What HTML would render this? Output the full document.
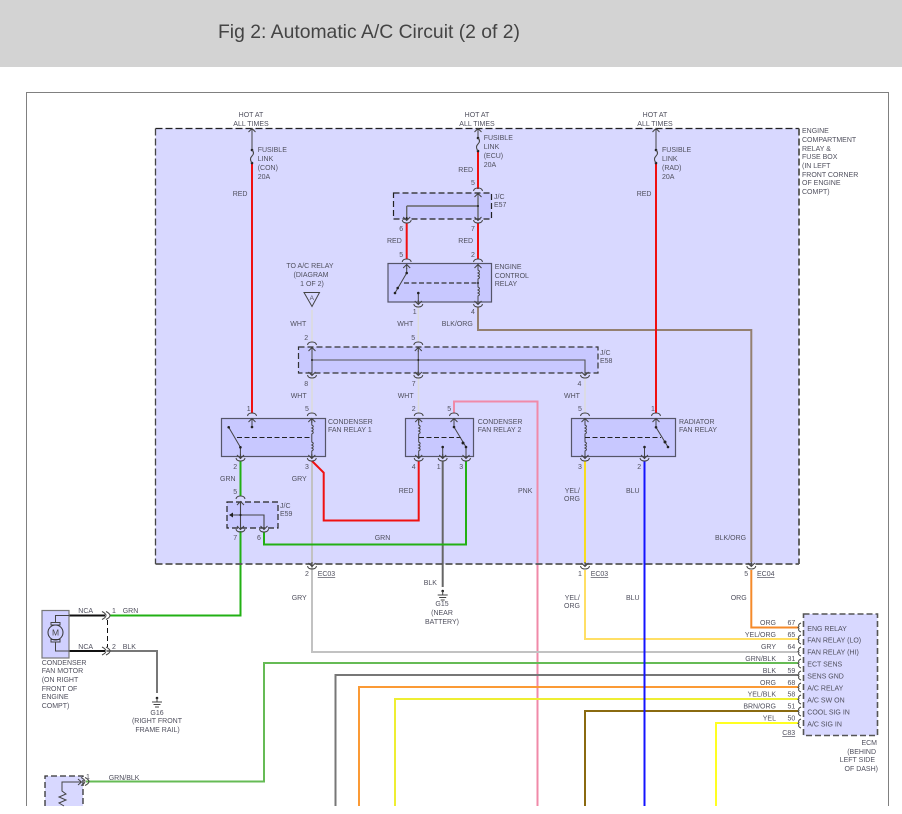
<!DOCTYPE html>
<html><head><meta charset="utf-8"><title>Fig 2: Automatic A/C Circuit (2 of 2)</title>
<style>
html,body{margin:0;padding:0;background:#fff;width:902px;height:814px;overflow:hidden}
svg{display:block}
text{font-family:"Liberation Sans",sans-serif;font-size:7px;fill:#50505e}
.m{text-anchor:middle}.e{text-anchor:end}.u{text-decoration:underline}
.w{fill:none;stroke-width:2}
.d{fill:none;stroke:#333;stroke-width:1.2;stroke-dasharray:7 3}
.s{fill:none;stroke:#444;stroke-width:1}
.r{fill:#c8c8ff;stroke:#555568;stroke-width:1.2}
.c{fill:#222}
</style></head><body>
<svg width="902" height="814" viewBox="0 0 902 814" xmlns="http://www.w3.org/2000/svg">
<defs>
<g id="t"><path class="s" d="M-4.5 3Q-4 0 0 0Q4 0 4.5 3M-3.5 9L0 5.5L3.5 9M0 5.5V10"/></g>
<g id="b"><path class="s" d="M-4.5 -3Q-4 0 0 0Q4 0 4.5 -3M-3.5 -6L0 -2.5L3.5 -6M0 -2.5V-7"/></g>
<g id="k"><path class="s" d="M0 -4.5Q-3.5 -3 -2 -1Q-2.5 0 -3.5 0Q-2.5 0 -2 1Q-3.5 3 0 4.5"/></g>
<g id="h"><path class="s" d="M-3 -4Q1 -2 1 0Q1 2 -3 4M1 -4Q5 -2 5 0Q5 2 1 4"/></g>
<g id="g"><circle cx="0" cy="0" r="1.3" class="c"/><path class="s" d="M0 0V4M-5 4H5M-3.5 6.5H3.5M-2 9H2"/></g>
<g id="f"><circle cx="0" cy="0" r="1.3" class="c"/><circle cx="0" cy="13" r="1.3" class="c"/><path d="M0 0Q3 3 0 6Q-3 9 0 13" fill="none" stroke="#444" stroke-width="1.1"/></g>
<g id="coil"><path class="s" d="M0 0V6Q3 7.5 0 9Q3 10.5 0 12Q3 13.5 0 15V23Q3 24.5 0 26Q3 27.5 0 29Q3 30.5 0 32V40"/></g>
</defs>

<rect x="0" y="0" width="902" height="67" fill="#d3d3d3"/>
<text x="218" y="38" textLength="302" lengthAdjust="spacingAndGlyphs" style="font-size:19.5px;fill:#444">Fig 2: Automatic A/C Circuit (2 of 2)</text>

<path d="M26.5 806V92.5H888.5V806" fill="none" stroke="#808080" stroke-width="1"/>

<rect x="155.5" y="128.5" width="643.5" height="435.5" fill="#d8d8ff"/>

<!-- inner boxes -->
<rect x="393.5" y="193" width="98" height="26" fill="#c8c8ff"/>
<rect x="298.5" y="347" width="299.5" height="26" fill="#c8c8ff"/>
<rect x="227" y="502" width="51" height="26" fill="#c8c8ff"/>
<rect x="388" y="263.5" width="103.5" height="38.5" class="r"/>
<rect x="221.5" y="418.5" width="104" height="38" class="r"/>
<rect x="405.5" y="418.5" width="68" height="38" class="r"/>
<rect x="571.5" y="418.5" width="104" height="38" class="r"/>

<!-- wires -->
<g class="w">
<path d="M312 310V342M418.3 307V342M312 378V413M418.5 378V413M585 378V413" stroke="#dcdcdc" stroke-width="1.5" fill="none"/>
<path d="M478 307V330H751.3V562" stroke="#948070" fill="none"/>
<path d="M454 413V401.5H537.5V806" stroke="#f08aa8" fill="none"/>
<path d="M312 461V652H798" stroke="#c2c2c2" fill="none"/>
<path d="M442.7 461V587" stroke="#666" fill="none"/>
<path d="M107 651H157V693" stroke="#777" fill="none"/>
<path d="M264 532V544.5H466V461" stroke="#22b014" fill="none"/>
<path d="M240.5 461V496M240.5 531V615.5H110" stroke="#22b014" fill="none"/>
<path d="M585 461V563" stroke="#f6dc20" fill="none"/>
<path d="M585 570V639H798" stroke="#ffdf66" fill="none"/>
<path d="M751.3 570V627.5H798" stroke="#f58a2a" fill="none"/>
<path d="M86 781.5H264V663H798" stroke="#66bb55" fill="none"/>
<path d="M335.5 806V675H798" stroke="#777" fill="none"/>
<path d="M359 806V687H798" stroke="#fb9a35" fill="none"/>
<path d="M395 806V699H798" stroke="#eeee33" fill="none"/>
<path d="M585 806V711H798" stroke="#8a6a10" fill="none"/>
<path d="M716 806V723H798" stroke="#ffff22" fill="none"/>
<path d="M644.5 461V806" stroke="#1414ff" fill="none"/>
<path d="M252 163V413M478 152V189M406.7 223V259M478 223V259M656 163V413M312 461L323.7 472.7V520.5H418.7V461" stroke="#f01010" fill="none"/>
<path d="M69 615.5H105M69 651H105" stroke="#111" fill="none"/>
</g>

<!-- main dashed box -->
<path d="M155.5 128.5H799" class="d" style="stroke:#222"/>
<path d="M155.5 128.5V564" class="d" style="stroke:#444;stroke-width:1.3"/>
<path d="M799 128.5V564M155.5 564H799" class="d" style="stroke:#555;stroke-width:1.8"/>

<!-- J/C dashed boxes -->
<rect x="393.5" y="193" width="98" height="26" class="d" style="stroke:#222;stroke-dasharray:6 3"/>
<rect x="298.5" y="347" width="299.5" height="26" class="d" style="stroke:#333;stroke-dasharray:6 3"/>
<rect x="227" y="502" width="51" height="26" class="d" style="stroke:#222;stroke-dasharray:6 3"/>
<rect x="803.5" y="614" width="74" height="121.5" fill="#d8d8ff"/>
<rect x="803.5" y="614" width="74" height="121.5" class="d" style="stroke:#555;stroke-width:1.6;stroke-dasharray:6 3"/>

<!-- fuses and top feed -->
<path class="s" d="M252 128V150M478 128V137M656 128V150M248.5 132L252 128.5L255.5 132M474.5 132L478 128.5L481.5 132M652.5 132L656 128.5L659.5 132"/>
<use href="#f" x="252" y="150"/><use href="#f" x="478" y="138"/><use href="#f" x="656" y="150"/>

<!-- E57 -->
<use href="#t" x="478" y="188"/><use href="#b" x="406.7" y="223"/><use href="#b" x="478" y="223"/>
<path d="M478 198V218M406.7 206V218M406.7 206H478" fill="none" stroke="#666" stroke-width="1.4"/>
<circle cx="478" cy="206" r="1" class="c"/><circle cx="406.7" cy="218" r="1" class="c"/>

<!-- engine relay -->
<use href="#t" x="406.7" y="259"/><use href="#t" x="478" y="259"/><use href="#b" x="418.3" y="307"/><use href="#b" x="478" y="307"/>
<use href="#coil" x="478" y="264"/>
<path class="s" d="M406.7 268V273L395 293"/><path d="M404 283H478" fill="none" stroke="#333" stroke-width="1.2" stroke-dasharray="5 2.5"/>
<path class="s" d="M418.3 293V302"/>
<circle cx="406.7" cy="273" r="1.3" class="c"/><circle cx="395" cy="293" r="1.3" class="c"/><circle cx="397.7" cy="288" r="1.3" class="c"/><circle cx="418.3" cy="293" r="1.3" class="c"/><circle cx="478" cy="283" r="1" class="c"/>

<!-- triangle -->
<path d="M304 292.5H319.5L312 306.5Z" fill="none" stroke="#444" stroke-width="1"/>
<text x="311.8" y="300" class="m" style="font-size:6.5px">A</text>

<!-- E58 -->
<use href="#t" x="312" y="342"/><use href="#t" x="418.3" y="342"/>
<use href="#b" x="312" y="378"/><use href="#b" x="418.3" y="378"/><use href="#b" x="585" y="378"/>
<path d="M312 350V372M418.3 350V372M312 360H585V372" fill="none" stroke="#555" stroke-width="1.1"/>
<circle cx="312" cy="360" r="1" class="c"/><circle cx="418.3" cy="360" r="1" class="c"/>

<!-- relay 1 -->
<use href="#t" x="252" y="413"/><use href="#t" x="311.8" y="413"/><use href="#b" x="240.5" y="461"/><use href="#b" x="311.8" y="461"/>
<path class="s" d="M252 419V427M228.7 427.3L240.4 447.3V459"/>
<use href="#coil" x="311.8" y="419"/>
<path d="M237 437.5H312" fill="none" stroke="#222" stroke-width="1.1" stroke-dasharray="5 2.5"/>
<circle cx="252" cy="427" r="1.3" class="c"/><circle cx="228.7" cy="427.3" r="1.3" class="c"/><circle cx="240.4" cy="447.3" r="1.3" class="c"/>

<!-- relay 2 -->
<use href="#t" x="418.7" y="413"/><use href="#t" x="454" y="413"/><use href="#b" x="418.7" y="461"/><use href="#b" x="442.7" y="461"/><use href="#b" x="466" y="461"/>
<use href="#coil" x="418.7" y="419"/>
<path d="M419 437.5H461" fill="none" stroke="#222" stroke-width="1.1" stroke-dasharray="5 2.5"/>
<path class="s" d="M454 419V427L466 447V459M442.7 447V459"/>
<circle cx="454" cy="427" r="1.3" class="c"/><circle cx="463" cy="443" r="1.5" class="c"/><circle cx="466" cy="447" r="1.3" class="c"/><circle cx="442.7" cy="447" r="1.3" class="c"/>

<!-- radiator relay -->
<use href="#t" x="585" y="413"/><use href="#t" x="656" y="413"/><use href="#b" x="585" y="461"/><use href="#b" x="644.5" y="461"/>
<use href="#coil" x="585" y="419"/>
<path d="M585 437.5H661" fill="none" stroke="#222" stroke-width="1.1" stroke-dasharray="5 2.5"/>
<path class="s" d="M656 419V427.3L668 447M644.5 447V459"/>
<circle cx="656" cy="427.3" r="1.3" class="c"/><circle cx="665" cy="442" r="1.5" class="c"/><circle cx="668" cy="447" r="1.3" class="c"/><circle cx="644.5" cy="447" r="1.3" class="c"/>

<!-- E59 -->
<use href="#t" x="240.5" y="496"/><use href="#b" x="240.5" y="532"/><use href="#b" x="264" y="532"/>
<path d="M240.5 502V527M232 515H264V527" fill="none" stroke="#444" stroke-width="1.1"/>
<path d="M229 515L233 512.5V517.5Z" class="c"/><circle cx="240.5" cy="515" r="1.1" class="c"/>

<!-- lower connectors -->
<use href="#b" x="312" y="569"/><use href="#b" x="585" y="569"/><use href="#b" x="751.3" y="569"/>

<!-- grounds -->
<use href="#g" x="442.7" y="591"/><use href="#g" x="157" y="698"/>

<!-- motor -->
<rect x="42" y="610.5" width="27" height="47.5" fill="#d0d0ff" stroke="#777" stroke-width="1.2"/>
<path class="s" d="M69 615.5H55.5V622M55.5 642V651H69"/>
<path class="s" d="M51 622.5H60V625H51ZM51 639.5H60V642H51Z"/>
<circle cx="55.5" cy="632.5" r="7.5" fill="none" stroke="#333" stroke-width="1"/>
<text x="55.5" y="635.5" class="m" style="font-size:8.5px;fill:#444">M</text>
<use href="#h" x="105" y="615.5"/><use href="#h" x="105" y="651"/>
<path d="M107.5 620V647" fill="none" stroke="#111" stroke-width="1" stroke-dasharray="5 3"/>

<!-- bottom-left sensor -->
<rect x="45" y="776" width="38" height="30" fill="#d8d8ff"/>
<path d="M45 806V776H83V806" fill="none" stroke="#333" stroke-width="1.3" stroke-dasharray="6 3"/>
<path class="s" d="M81 782H62V791L66 794L59 797L66 800L59 803L64 806M78 779L81.5 782L78 785"/>
<use href="#h" x="84" y="781.5"/>

<!-- ECM connectors -->
<use href="#k" x="801" y="627.5"/><use href="#k" x="801" y="639.5"/><use href="#k" x="801" y="651.5"/><use href="#k" x="801" y="663.5"/><use href="#k" x="801" y="675.5"/><use href="#k" x="801" y="687.5"/><use href="#k" x="801" y="699.5"/><use href="#k" x="801" y="711.5"/><use href="#k" x="801" y="723.5"/>

<!-- labels -->
<g>
<text x="251" y="117" class="m">HOT AT</text><text x="251" y="126" class="m">ALL TIMES</text>
<text x="477" y="117" class="m">HOT AT</text><text x="477" y="126" class="m">ALL TIMES</text>
<text x="655" y="117" class="m">HOT AT</text><text x="655" y="126" class="m">ALL TIMES</text>

<text x="257.7" y="152">FUSIBLE</text><text x="257.7" y="161">LINK</text><text x="257.7" y="170">(CON)</text><text x="257.7" y="179">20A</text>
<text x="483.7" y="140">FUSIBLE</text><text x="483.7" y="149">LINK</text><text x="483.7" y="158">(ECU)</text><text x="483.7" y="167">20A</text>
<text x="662" y="152">FUSIBLE</text><text x="662" y="161">LINK</text><text x="662" y="170">(RAD)</text><text x="662" y="179">20A</text>

<text x="232.7" y="196">RED</text><text x="458.3" y="172">RED</text><text x="636.7" y="196">RED</text>

<text x="802" y="133">ENGINE</text><text x="802" y="142">COMPARTMENT</text><text x="802" y="151">RELAY &amp;</text><text x="802" y="159">FUSE BOX</text><text x="802" y="168">(IN LEFT</text><text x="802" y="177">FRONT CORNER</text><text x="802" y="185">OF ENGINE</text><text x="802" y="194">COMPT)</text>

<text x="471" y="185">5</text>
<text x="494" y="199">J/C</text><text x="494" y="207">E57</text>
<text x="399.3" y="231">6</text><text x="471" y="231">7</text>
<text x="387" y="243">RED</text><text x="458.3" y="243">RED</text>
<text x="399.3" y="257">5</text><text x="471" y="257">2</text>
<text x="494.7" y="269">ENGINE</text><text x="494.7" y="278">CONTROL</text><text x="494.7" y="286">RELAY</text>
<text x="310" y="268" class="m">TO A/C RELAY</text><text x="311" y="277" class="m">(DIAGRAM</text><text x="312" y="286" class="m">1 OF 2)</text>
<text x="412.7" y="314">1</text><text x="471" y="314">4</text>
<text x="290.3" y="326">WHT</text><text x="397.3" y="326">WHT</text><text x="441.7" y="326">BLK/ORG</text>
<text x="304.3" y="340">2</text><text x="411.3" y="340">5</text>
<text x="600" y="355">J/C</text><text x="600" y="363">E58</text>
<text x="304.3" y="386">8</text><text x="411.7" y="386">7</text><text x="577.5" y="386">4</text>
<text x="290.7" y="398">WHT</text><text x="397.7" y="398">WHT</text><text x="564" y="398">WHT</text>
<text x="246.7" y="411">1</text><text x="305" y="411">5</text><text x="411.7" y="411">2</text><text x="447.3" y="411">5</text><text x="578" y="411">5</text><text x="651" y="411">1</text>
<text x="328" y="424">CONDENSER</text><text x="328" y="432">FAN RELAY 1</text>
<text x="477.7" y="424">CONDENSER</text><text x="477.7" y="432">FAN RELAY 2</text>
<text x="679" y="424">RADIATOR</text><text x="679" y="432">FAN RELAY</text>
<text x="233.3" y="469">2</text><text x="305" y="469">3</text><text x="411.7" y="469">4</text><text x="436.7" y="469">1</text><text x="459.3" y="469">3</text><text x="578" y="469">3</text><text x="637.3" y="469">2</text>
<text x="220" y="481">GRN</text><text x="291.7" y="481">GRY</text>
<text x="233.3" y="494">5</text>
<text x="398.7" y="493">RED</text><text x="518" y="493">PNK</text><text x="564.7" y="493">YEL/</text><text x="564" y="501">ORG</text><text x="626" y="493">BLU</text>
<text x="280" y="508">J/C</text><text x="280" y="516">E59</text>
<text x="233.3" y="540">7</text><text x="257" y="540">6</text><text x="374.7" y="540">GRN</text><text x="715" y="540">BLK/ORG</text>
<text x="305" y="576">2</text><text x="317.7" y="576" class="u">EC03</text>
<text x="578" y="576">1</text><text x="590.7" y="576" class="u">EC03</text>
<text x="744.3" y="576">5</text><text x="757" y="576" class="u">EC04</text>
<text x="423.7" y="585">BLK</text>
<text x="291.7" y="600">GRY</text><text x="564.7" y="600">YEL/</text><text x="564" y="608">ORG</text><text x="626" y="600">BLU</text><text x="730.7" y="600">ORG</text>
<text x="442" y="606" class="m">G15</text><text x="442" y="615" class="m">(NEAR</text><text x="442" y="624" class="m">BATTERY)</text>

<text x="78.3" y="613">NCA</text><text x="112" y="613">1</text><text x="122.7" y="613">GRN</text>
<text x="78.3" y="649">NCA</text><text x="112" y="649">2</text><text x="122.7" y="649">BLK</text>
<text x="41.7" y="665">CONDENSER</text><text x="41.7" y="673">FAN MOTOR</text><text x="41.7" y="682">(ON RIGHT</text><text x="41.7" y="691">FRONT OF</text><text x="41.7" y="699">ENGINE</text><text x="41.7" y="708">COMPT)</text>
<text x="157" y="715" class="m">G16</text><text x="157" y="723" class="m">(RIGHT FRONT</text><text x="157.5" y="732" class="m">FRAME RAIL)</text>
<text x="86" y="779">1</text><text x="108.7" y="780">GRN/BLK</text>

<text x="776" y="625" class="e">ORG</text><text x="776" y="637" class="e">YEL/ORG</text><text x="776" y="649" class="e">GRY</text><text x="776" y="661" class="e">GRN/BLK</text><text x="776" y="673" class="e">BLK</text><text x="776" y="685" class="e">ORG</text><text x="776" y="696.5" class="e">YEL/BLK</text><text x="776" y="708.5" class="e">BRN/ORG</text><text x="776" y="720.5" class="e">YEL</text>
<text x="795.3" y="625" class="e">67</text><text x="795.3" y="637" class="e">65</text><text x="795.3" y="649" class="e">64</text><text x="795.3" y="661" class="e">31</text><text x="795.3" y="673" class="e">59</text><text x="795.3" y="685" class="e">68</text><text x="795.3" y="696.5" class="e">58</text><text x="795.3" y="708.5" class="e">51</text><text x="795.3" y="720.5" class="e">50</text>
<text x="807.3" y="631">ENG RELAY</text><text x="807.3" y="642.5">FAN RELAY (LO)</text><text x="807.3" y="654.5">FAN RELAY (HI)</text><text x="807.3" y="666.5">ECT SENS</text><text x="807.3" y="678.5">SENS GND</text><text x="807.3" y="690.5">A/C RELAY</text><text x="807.3" y="702.5">A/C SW ON</text><text x="807.3" y="714.5">COOL SIG IN</text><text x="807.3" y="726.5">A/C SIG IN</text>
<text x="782.3" y="735" class="u">C83</text>
<text x="877" y="745" class="e">ECM</text><text x="876" y="754" class="e">(BEHIND</text><text x="875" y="762" class="e">LEFT SIDE</text><text x="878" y="771" class="e">OF DASH)</text>
</g>
</svg>
</body></html>
